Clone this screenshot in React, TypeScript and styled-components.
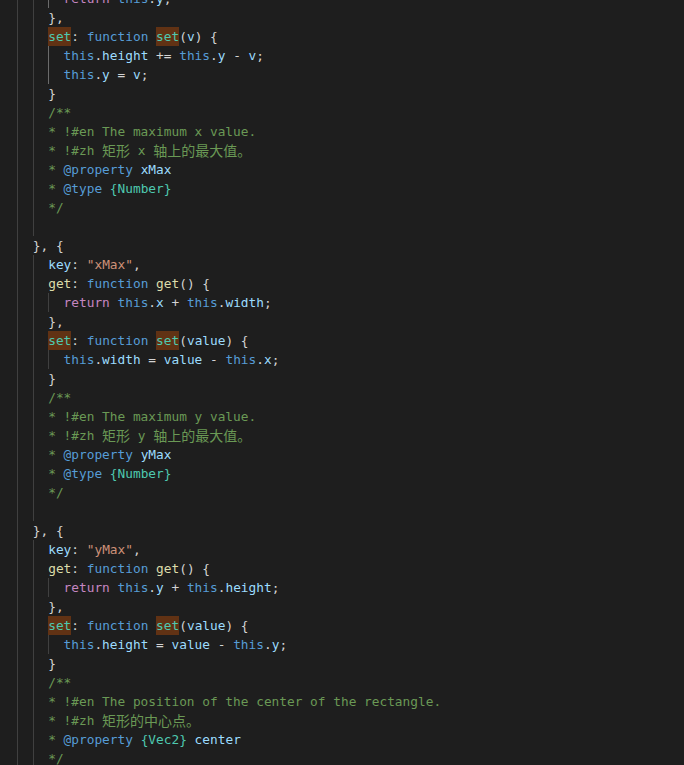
import React from "react";
import styled, { createGlobalStyle, css } from "styled-components";

const GlobalStyle = createGlobalStyle`
  html, body {
    margin: 0;
    padding: 0;
    background: #1e1e1e;
  }
  #root {
    min-height: 100vh;
    background: #1e1e1e;
  }
`;

type Kind =
  | "p"
  | "kw"
  | "prop"
  | "fn"
  | "hl"
  | "ctrl"
  | "str"
  | "cm"
  | "cjk"
  | "tag"
  | "type";

type Tok = [Kind, string];

interface LineData {
  level: number;
  toks: Tok[];
  active?: boolean;
}

const COLORS: Record<Kind, string> = {
  p: "#d4d4d4",
  kw: "#569cd6",
  prop: "#9cdcfe",
  fn: "#dcdcaa",
  hl: "#4ec9b0",
  ctrl: "#c586c0",
  str: "#ce9178",
  cm: "#6a9955",
  cjk: "#6a9955",
  tag: "#569cd6",
  type: "#4ec9b0",
};

const CHAR_W = 7.7;
const LINE_H = 19;

const Viewport = styled.div`
  width: 684px;
  height: 765px;
  overflow: hidden;
  background: #1e1e1e;
`;

const Code = styled.div`
  display: flex;
  flex-direction: column;
  margin-top: -11px;
  padding-left: 2px;
  font-family: "DejaVu Sans Mono", "Liberation Mono", monospace;
  font-size: 12.8px;
`;

const Line = styled.div`
  display: flex;
  height: ${LINE_H}px;
  white-space: pre;
`;

const Indent = styled.span<{ $guide: boolean; $active: boolean }>`
  display: block;
  flex: none;
  width: ${CHAR_W * 2}px;
  height: ${LINE_H}px;
  ${(p) =>
    p.$guide &&
    css`
      box-shadow: inset 1px 0 0 ${p.$active ? "#6b6b6b" : "#404040"};
    `}
`;

const Token = styled.span<{ $k: Kind }>`
  display: block;
  flex: none;
  line-height: ${LINE_H}px;
  height: ${LINE_H}px;
  color: ${(p) => COLORS[p.$k]};
  ${(p) =>
    p.$k === "hl" &&
    css`
      background: #613214;
    `}
  ${(p) =>
    p.$k === "cjk" &&
    css`
      font-family: "Noto Sans CJK SC", sans-serif;
      font-size: 14px;
    `}
`;

const t = (k: Kind, s: string): Tok => [k, s];
const p = (s: string) => t("p", s);
const kw = (s: string) => t("kw", s);
const pr = (s: string) => t("prop", s);
const fn = (s: string) => t("fn", s);
const hl = (s: string) => t("hl", s);
const cm = (s: string) => t("cm", s);
const cj = (s: string) => t("cjk", s);

const lines: LineData[] = [
  { level: 4, active: true, toks: [t("ctrl", "return"), p(" "), kw("this"), p("."), pr("y"), p(";")] },
  { level: 3, toks: [p("},")] },
  { level: 3, toks: [hl("set"), p(": "), kw("function"), p(" "), hl("set"), p("("), pr("v"), p(") {")] },
  {
    level: 4,
    active: true,
    toks: [kw("this"), p("."), pr("height"), p(" += "), kw("this"), p("."), pr("y"), p(" - "), pr("v"), p(";")],
  },
  { level: 4, active: true, toks: [kw("this"), p("."), pr("y"), p(" = "), pr("v"), p(";")] },
  { level: 3, toks: [p("}")] },
  { level: 3, toks: [cm("/**")] },
  { level: 3, toks: [cm("* !#en The maximum x value.")] },
  { level: 3, toks: [cm("* !#zh "), cj("矩形"), cm(" x "), cj("轴上的最大值。")] },
  { level: 3, toks: [cm("* "), t("tag", "@property"), cm(" "), pr("xMax")] },
  { level: 3, toks: [cm("* "), t("tag", "@type"), cm(" "), t("type", "{Number}")] },
  { level: 3, toks: [cm("*/")] },
  { level: 3, toks: [] },
  { level: 2, toks: [p("}, {")] },
  { level: 3, toks: [pr("key"), p(": "), t("str", '"xMax"'), p(",")] },
  { level: 3, toks: [fn("get"), p(": "), kw("function"), p(" "), fn("get"), p("() {")] },
  {
    level: 4,
    toks: [t("ctrl", "return"), p(" "), kw("this"), p("."), pr("x"), p(" + "), kw("this"), p("."), pr("width"), p(";")],
  },
  { level: 3, toks: [p("},")] },
  { level: 3, toks: [hl("set"), p(": "), kw("function"), p(" "), hl("set"), p("("), pr("value"), p(") {")] },
  {
    level: 4,
    toks: [kw("this"), p("."), pr("width"), p(" = "), pr("value"), p(" - "), kw("this"), p("."), pr("x"), p(";")],
  },
  { level: 3, toks: [p("}")] },
  { level: 3, toks: [cm("/**")] },
  { level: 3, toks: [cm("* !#en The maximum y value.")] },
  { level: 3, toks: [cm("* !#zh "), cj("矩形"), cm(" y "), cj("轴上的最大值。")] },
  { level: 3, toks: [cm("* "), t("tag", "@property"), cm(" "), pr("yMax")] },
  { level: 3, toks: [cm("* "), t("tag", "@type"), cm(" "), t("type", "{Number}")] },
  { level: 3, toks: [cm("*/")] },
  { level: 3, toks: [] },
  { level: 2, toks: [p("}, {")] },
  { level: 3, toks: [pr("key"), p(": "), t("str", '"yMax"'), p(",")] },
  { level: 3, toks: [fn("get"), p(": "), kw("function"), p(" "), fn("get"), p("() {")] },
  {
    level: 4,
    toks: [t("ctrl", "return"), p(" "), kw("this"), p("."), pr("y"), p(" + "), kw("this"), p("."), pr("height"), p(";")],
  },
  { level: 3, toks: [p("},")] },
  { level: 3, toks: [hl("set"), p(": "), kw("function"), p(" "), hl("set"), p("("), pr("value"), p(") {")] },
  {
    level: 4,
    toks: [kw("this"), p("."), pr("height"), p(" = "), pr("value"), p(" - "), kw("this"), p("."), pr("y"), p(";")],
  },
  { level: 3, toks: [p("}")] },
  { level: 3, toks: [cm("/**")] },
  { level: 3, toks: [cm("* !#en The position of the center of the rectangle.")] },
  { level: 3, toks: [cm("* !#zh "), cj("矩形的中心点。")] },
  { level: 3, toks: [cm("* "), t("tag", "@property"), cm(" "), t("type", "{Vec2}"), cm(" "), pr("center")] },
  { level: 3, toks: [cm("*/")] },
];

export default function App() {
  return (
    <>
      <GlobalStyle />
      <Viewport>
        <Code>
          {lines.map((line, i) => (
            <Line key={i}>
              {Array.from({ length: line.level }).map((_, u) => (
                <Indent
                  key={`i${u}`}
                  $guide={u >= 1}
                  $active={!!line.active && u === line.level - 1 && u === 3}
                />
              ))}
              {line.toks.map(([k, s], j) => (
                <Token key={j} $k={k}>
                  {s}
                </Token>
              ))}
            </Line>
          ))}
        </Code>
      </Viewport>
    </>
  );
}
